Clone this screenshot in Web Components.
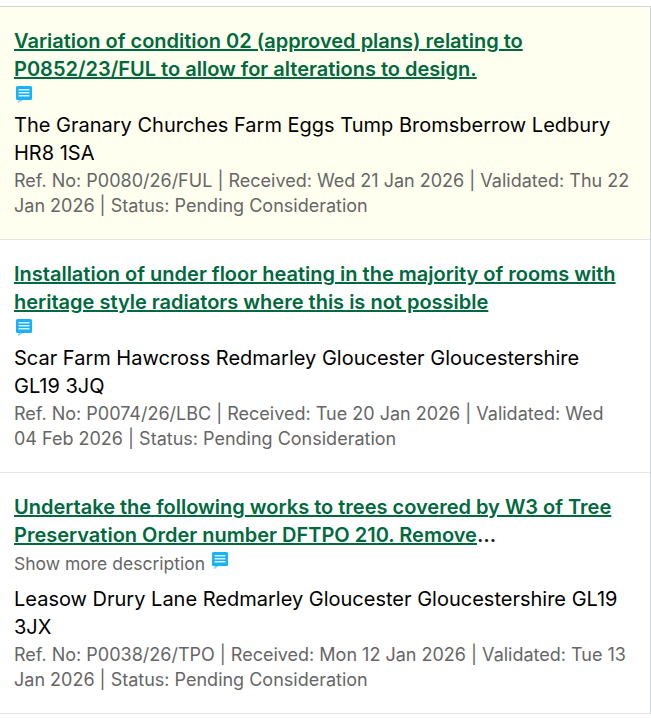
<!DOCTYPE html>
<html lang="en">
<head>
<meta charset="utf-8">
<title>Applications</title>
<style>
  html, body { margin: 0; padding: 0; background: #fff; }
  body { font-family: Inter, "Liberation Sans", sans-serif; }
</style>
</head>
<body>
<application-list>
  <application-item highlighted>
    <span slot="title">Variation of condition 02 (approved plans) relating to P0852/23/FUL to allow for alterations to design.</span>
    <span slot="address">The Granary Churches Farm Eggs Tump Bromsberrow Ledbury HR8 1SA</span>
    <span slot="meta">Ref. No: P0080/26/FUL | Received: Wed 21 Jan 2026 | Validated: Thu 22 Jan 2026 | Status: Pending Consideration</span>
  </application-item>
  <application-item>
    <span slot="title">Installation of under floor heating in the majority of rooms with heritage style radiators where this is not possible</span>
    <span slot="address">Scar Farm Hawcross Redmarley Gloucester Gloucestershire GL19 3JQ</span>
    <span slot="meta">Ref. No: P0074/26/LBC | Received: Tue 20 Jan 2026 | Validated: Wed 04 Feb 2026 | Status: Pending Consideration</span>
  </application-item>
  <application-item more>
    <span slot="title">Undertake the following works to trees covered by W3 of Tree Preservation Order number DFTPO 210. Remove</span>
    <span slot="address">Leasow Drury Lane Redmarley Gloucester Gloucestershire GL19 3JX</span>
    <span slot="meta">Ref. No: P0038/26/TPO | Received: Mon 12 Jan 2026 | Validated: Tue 13 Jan 2026 | Status: Pending Consideration</span>
  </application-item>
</application-list>

<script>
class ApplicationList extends HTMLElement {
  constructor() {
    super();
    let shadowDom = this.attachShadow({ mode: "open" });
    shadowDom.innerHTML = `
      <style>
        :host {
          display: block;
          box-sizing: border-box;
          margin-top: 6px;
          border-top: 1px solid #d1d5db;
          border-right: 1px solid #d1d5db;
        }
      </style>
      <slot></slot>
    `;
  }
}

class CommentIcon extends HTMLElement {
  constructor() {
    super();
    let shadowDom = this.attachShadow({ mode: "open" });
    shadowDom.innerHTML = `
      <style>
        :host { display: block; width: 16px; height: 17px; line-height: 0; }
      </style>
      <svg width="16" height="17" viewBox="0 0 16 17" aria-hidden="true">
        <path d="M1.500 0h13A1.500 1.500 0 0 1 16 1.500v11a1.500 1.500 0 0 1-1.500 1.500H6.500L2 17l1-3H1.500A1.500 1.500 0 0 1 0 12.500v-11A1.500 1.500 0 0 1 1.500 0z" fill="#1ab2f5"/>
        <path d="M6.500 14 2 17l1-3z" fill="#8fd8fb"/>
        <path d="M2.500 3.800h11M2.500 6.800h11M2.500 9.800h11" stroke="#d4f1ff" stroke-width="1.600" fill="none"/>
      </svg>
    `;
  }
}

class ApplicationItem extends HTMLElement {
  constructor() {
    super();
    let shadowDom = this.attachShadow({ mode: "open" });
    shadowDom.innerHTML = `
      <style>
        :host {
          display: block;
          box-sizing: border-box;
          padding: 20px 20px 21px 14px;
          border-bottom: 1px solid #e5e5e5;
          background: #fff;
          color: #000;
        }
        :host([highlighted]) { background: #fffff0; }
        a {
          display: block;
          font-size: 20px;
          line-height: 28px;
          font-weight: 600;
          color: #00693e;
          text-decoration: underline;
          text-decoration-thickness: 2px;
        }
        /* clamped description: the dots sit outside the underline */
        :host([more]) a::after { content: "…"; display: inline-block; color: #222; }
        .actions { display: flex; gap: 7px; height: 28px; padding: 3px 0 0 2px; box-sizing: border-box; }
        .more { display: none; font-size: 17.500px; line-height: 25px; color: #666; }
        :host([more]) .more { display: block; }
        :host([more]) .actions { height: 36px; padding: 2px 0 0; }
        :host([more]) comment-icon { margin-top: 1px; }
        .address { font-size: 20px; line-height: 28px; }
        .meta { font-size: 18px; line-height: 25px; color: #666; margin-top: 1px; }
      </style>
      <a href="#"><slot name="title"></slot></a>
      <div class="actions">
        <span class="more">Show more description</span>
        <comment-icon></comment-icon>
      </div>
      <div class="address"><slot name="address"></slot></div>
      <div class="meta"><slot name="meta"></slot></div>
    `;
  }
}

customElements.define("comment-icon", CommentIcon);
customElements.define("application-item", ApplicationItem);
customElements.define("application-list", ApplicationList);
</script>
</body>
</html>
